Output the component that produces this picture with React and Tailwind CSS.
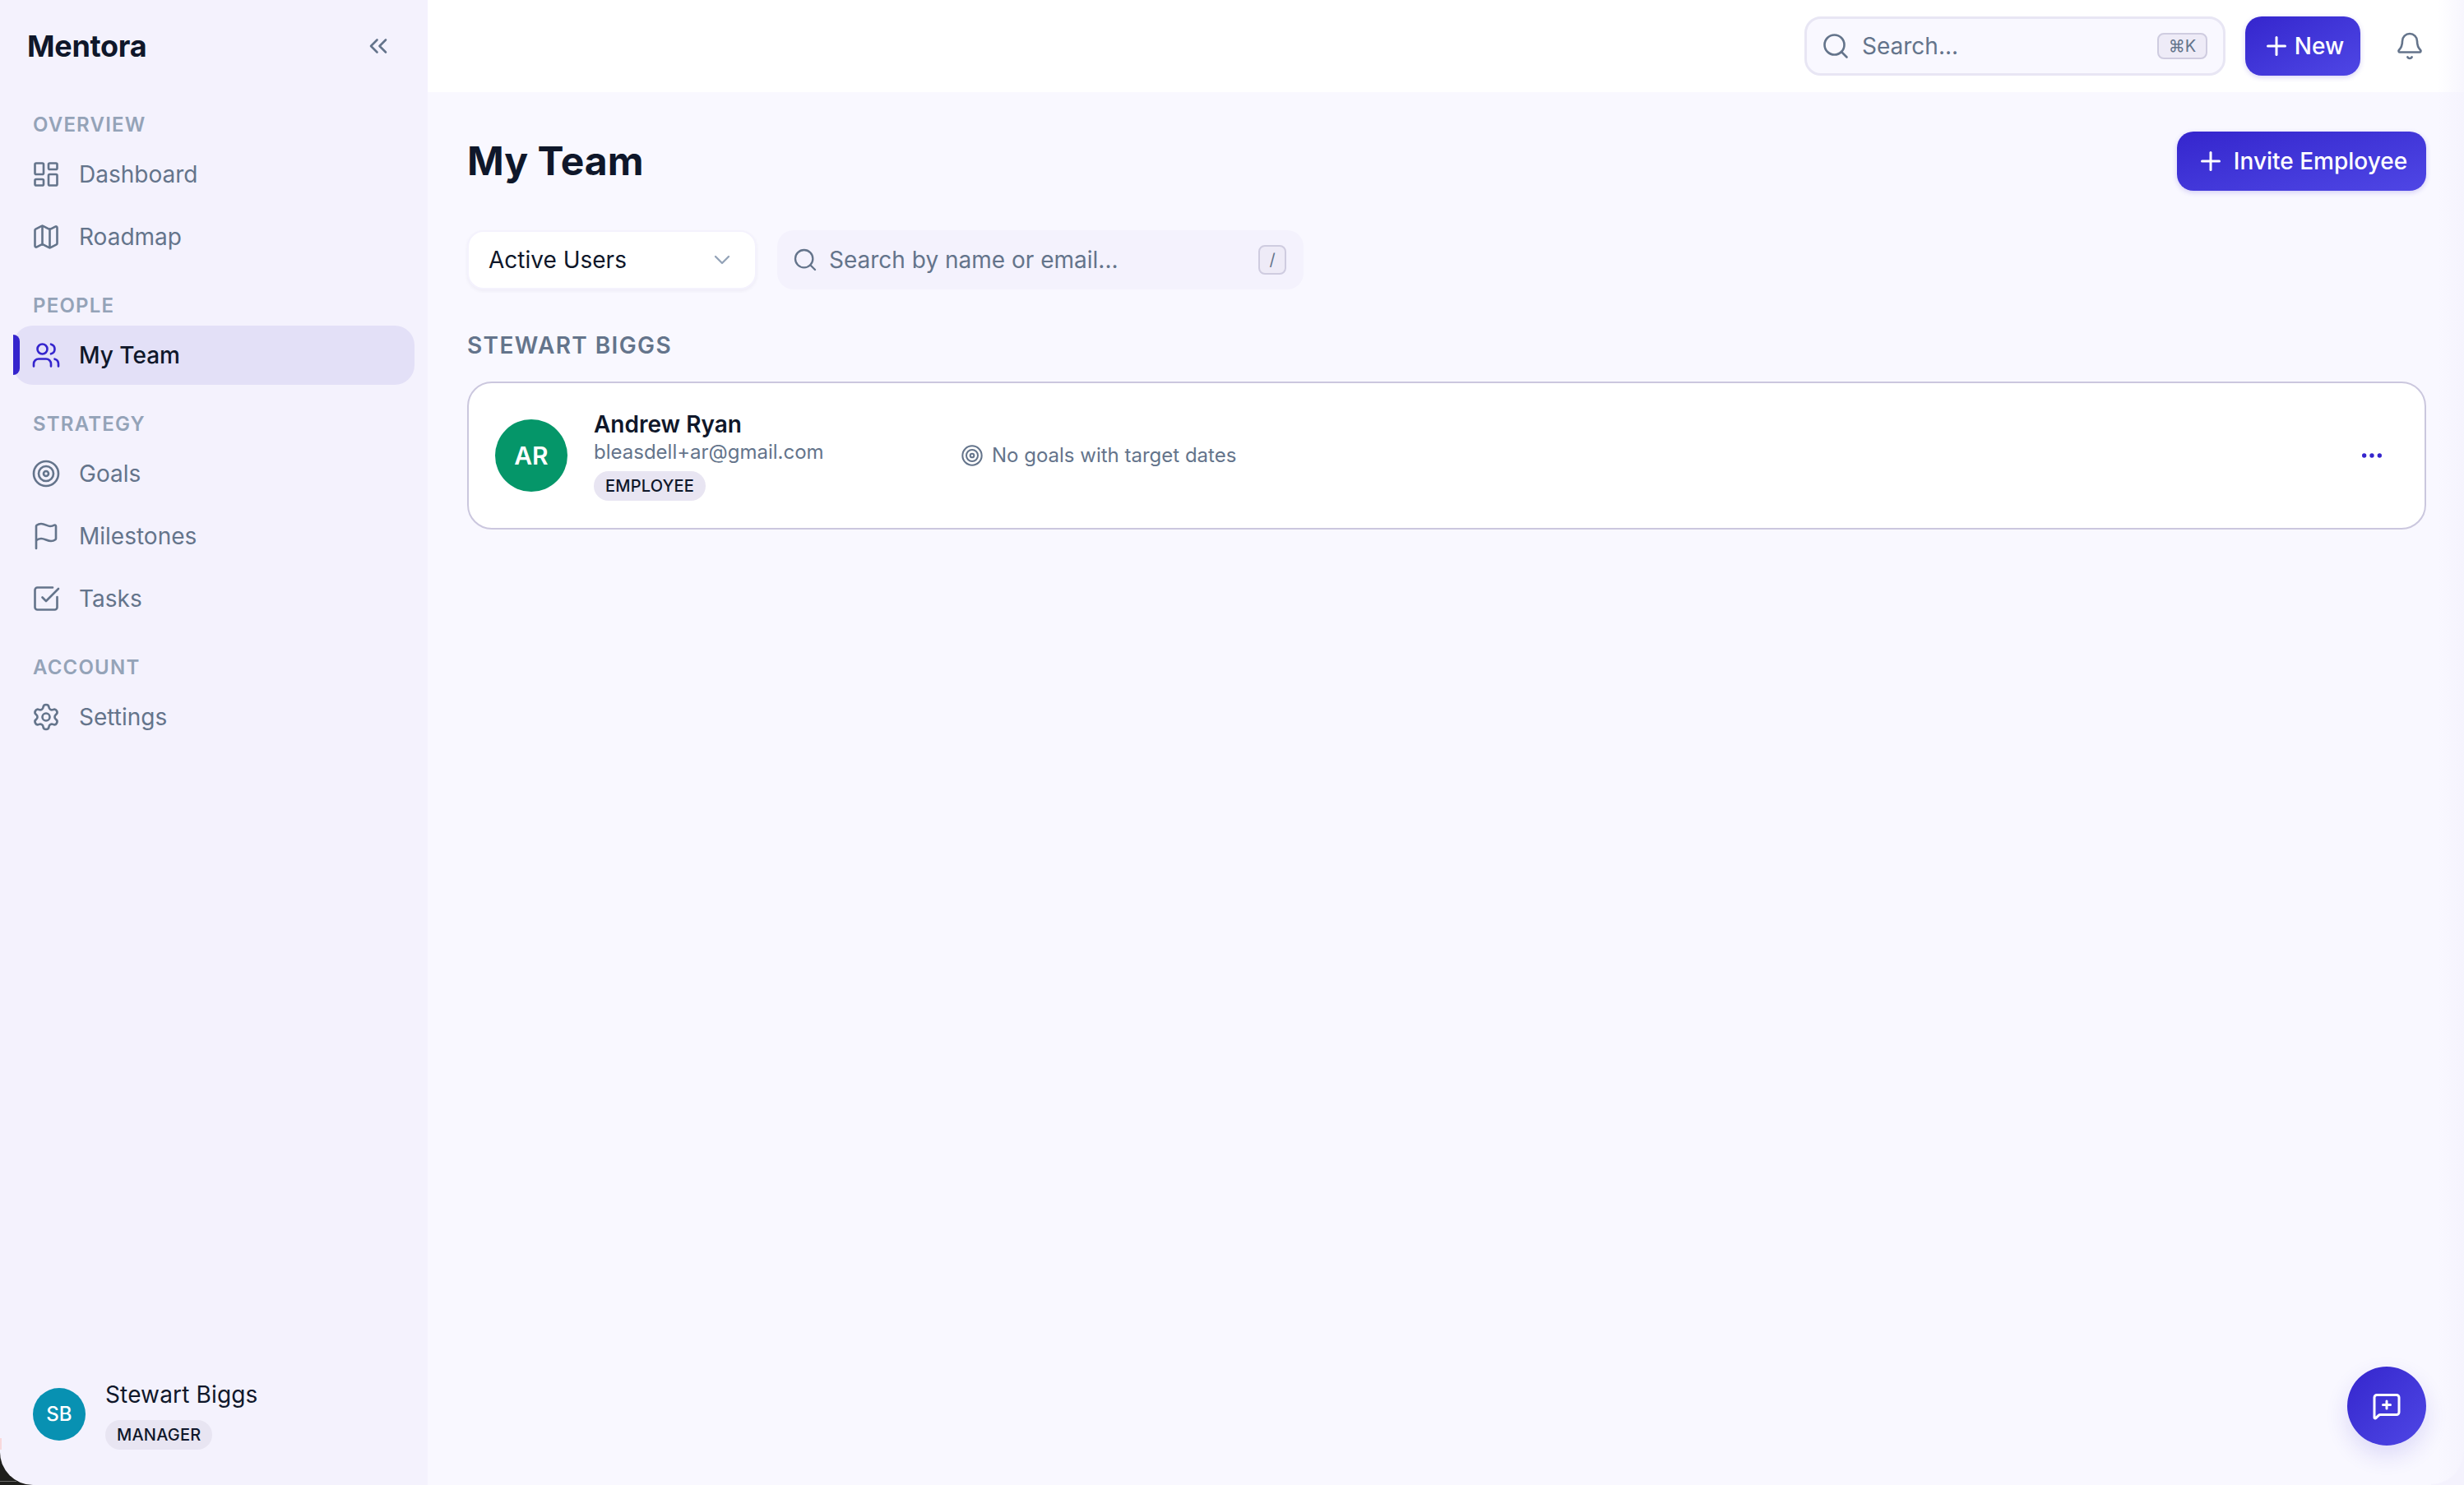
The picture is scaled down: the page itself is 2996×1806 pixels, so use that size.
import React from "react";
import { LayoutDashboard, Map as MapIcon, Users, Target, Flag, SquareCheckBig, Settings, ChevronsLeft, Search, Plus, Bell, ChevronDown, Ellipsis, MessageSquarePlus } from "lucide-react";

function NavItem({ icon: Icon, label, active }) {
  return (
    <div className={`relative flex h-[72px] items-center gap-[22px] rounded-[24px] pl-[22px] text-[28px] leading-none ${active ? "bg-[#e3e0f7] font-medium text-[#0f172a]" : "text-[#64748b]"}`}>
      {active && <span className="absolute left-0 top-[11px] h-[49px] w-[8px] rounded-r-[8px] bg-[#3525cd]" />}
      <Icon className={`h-[36px] w-[36px] ${active ? "text-[#3525cd]" : "text-[#64748b]"}`} strokeWidth={1.75} />
      <span>{label}</span>
    </div>
  );
}

function SectionTitle({ children }) {
  return <div className="mb-[9px] ml-[24px] h-[30px] text-[24px] font-semibold leading-[30px] tracking-[1.2px] text-[#94a3b8]">{children}</div>;
}

function Badge({ children }) {
  return <span className="inline-flex h-[36px] items-center rounded-full bg-[#e8e5f2] px-[14px] text-[20px] font-medium leading-none tracking-[0.2px] text-[#0f172a]">{children}</span>;
}

export default function App() {
  return (
    <div className="relative flex h-[1806px] w-[2996px] overflow-hidden bg-[#1e1e1c] font-['Inter',sans-serif]">
      <aside className="flex h-full w-[520px] shrink-0 flex-col rounded-bl-[40px] bg-[#f4f2fd] pb-[43px]">
        <div className="flex h-[112px] items-center justify-between pl-[33px] pr-[42px]">
          <span className="text-[36px] font-bold leading-none tracking-[-0.3px] text-[#0f172a]">Mentora</span>
          <ChevronsLeft className="h-[36px] w-[36px] text-[#64748b]" strokeWidth={1.75} />
        </div>
        <nav className="flex flex-1 flex-col px-[16px] pt-[25px]">
          <SectionTitle>OVERVIEW</SectionTitle>
          <div className="flex flex-col gap-[4px]">
            <NavItem icon={LayoutDashboard} label="Dashboard" />
            <NavItem icon={MapIcon} label="Roadmap" />
          </div>
          <div className="mt-[33px]"><SectionTitle>PEOPLE</SectionTitle></div>
          <NavItem icon={Users} label="My Team" active />
          <div className="mt-[33px]"><SectionTitle>STRATEGY</SectionTitle></div>
          <div className="flex flex-col gap-[4px]">
            <NavItem icon={Target} label="Goals" />
            <NavItem icon={Flag} label="Milestones" />
            <NavItem icon={SquareCheckBig} label="Tasks" />
          </div>
          <div className="mt-[33px]"><SectionTitle>ACCOUNT</SectionTitle></div>
          <NavItem icon={Settings} label="Settings" />
        </nav>
        <div className="flex items-center gap-[24px] pl-[40px]">
          <div className="mb-[2px] flex h-[64px] w-[64px] items-center justify-center rounded-full bg-[#0891b2] text-[24px] font-medium text-white">SB</div>
          <div className="flex flex-col items-start gap-[14px]">
            <span className="text-[28px] leading-[34px] tracking-[0.15px] text-[#0f172a]">Stewart Biggs</span>
            <Badge>MANAGER</Badge>
          </div>
        </div>
      </aside>

      <div className="flex min-w-0 flex-1 flex-col bg-[#f9f8ff]">
        <header className="flex h-[112px] items-center justify-end bg-white pr-[48px]">
          <div className="flex h-[72px] w-[512px] items-center rounded-[20px] border-[3px] border-[#e8e6f4] bg-[#f9f8ff] pl-[17px] pr-[19px]">
            <Search className="h-[36px] w-[36px] text-[#64748b]" strokeWidth={1.75} />
            <span className="ml-[14px] flex-1 text-[28px] leading-none text-[#64748b]">Search...</span>
            <kbd className="flex h-[32px] w-[61px] items-center justify-center rounded-[8px] border-2 border-[#cfcce0] bg-[#eeebf7] font-['Inter',sans-serif] text-[20px] leading-none text-[#64748b]">⌘K</kbd>
          </div>
          <button className="ml-[24px] flex h-[72px] w-[140px] items-center justify-center gap-[4px] rounded-[20px] bg-gradient-to-br from-[#3525cd] to-[#4f46e5] text-[28px] font-medium leading-none text-white shadow-[0_2px_6px_rgba(53,37,205,0.2)]">
            <Plus className="h-[36px] w-[36px]" strokeWidth={2} />
            New
          </button>
          <Bell className="ml-[42px] h-[36px] w-[36px] text-[#64748b]" strokeWidth={1.75} />
        </header>

        <main className="relative flex-1 pl-[48px] pr-[46px]">
          <div className="mt-[48px] flex h-[72px] items-center justify-between">
            <h1 className="text-[48px] font-bold leading-none text-[#0f172a]">My Team</h1>
            <button className="flex h-[72px] w-[303px] items-center justify-center gap-[10px] rounded-[20px] bg-gradient-to-br from-[#3525cd] to-[#4f46e5] text-[28px] font-medium leading-none text-white shadow-[0_2px_6px_rgba(53,37,205,0.2)]">
              <Plus className="h-[36px] w-[36px]" strokeWidth={2} />
              Invite Employee
            </button>
          </div>

          <div className="mt-[48px] flex gap-[25px]">
            <div className="flex h-[72px] w-[352px] items-center justify-between rounded-[20px] border-2 border-[#f4f2fd] bg-white pl-[24px] pr-[24px] shadow-[0_2px_4px_rgba(30,27,75,0.05)]">
              <span className="text-[28px] leading-none text-[#0f172a]">Active Users</span>
              <ChevronDown className="h-[32px] w-[32px] text-[#94a3b8]" strokeWidth={1.75} />
            </div>
            <div className="flex h-[72px] w-[640px] items-center rounded-[20px] bg-[#f4f2fd] pl-[18px] pr-[21px]">
              <Search className="h-[32px] w-[32px] text-[#64748b]" strokeWidth={1.75} />
              <span className="ml-[13px] flex-1 text-[28px] leading-none text-[#64748b]">Search by name or email...</span>
              <kbd className="flex h-[36px] w-[34px] items-center justify-center rounded-[8px] border-2 border-[#cfcce0] bg-[#eeebf7] font-['Inter',sans-serif] text-[20px] leading-none text-[#64748b]">/</kbd>
            </div>
          </div>

          <div className="mt-[50px] text-[28px] font-semibold leading-[36px] tracking-[1.4px] text-[#64748b]">STEWART BIGGS</div>

          <div className="mt-[26px] flex h-[180px] items-center rounded-[30px] border-2 border-[#cbc7de] bg-white pl-[32px] pr-[48px]">
            <div className="flex h-[88px] w-[88px] shrink-0 items-center justify-center rounded-full bg-[#059669] text-[30px] font-semibold text-white">AR</div>
            <div className="mb-[2px] ml-[32px] flex w-[445px] shrink-0 flex-col items-start">
              <span className="text-[28px] font-semibold leading-[36px] text-[#0f172a]">Andrew Ryan</span>
              <span className="text-[24px] leading-[32px] text-[#64748b]">bleasdell+ar@gmail.com</span>
              <span className="mt-[7px]"><Badge>EMPLOYEE</Badge></span>
            </div>
            <div className="flex flex-1 items-center gap-[10px] pl-[1px] text-[24px] leading-none text-[#64748b]">
              <Target className="h-[28px] w-[28px]" strokeWidth={1.75} />
              <span>No goals with target dates</span>
            </div>
            <Ellipsis className="h-[32px] w-[32px] text-[#3525cd]" strokeWidth={2} />
          </div>

          <button className="absolute bottom-[48px] right-[46px] flex h-[96px] w-[96px] items-center justify-center rounded-full bg-gradient-to-br from-[#3525cd] to-[#4f46e5] text-white shadow-[0_12px_28px_rgba(53,37,205,0.14)]">
            <MessageSquarePlus className="h-[36px] w-[36px]" strokeWidth={2} />
          </button>
        </main>
      </div>

      <div className="pointer-events-none absolute right-0 top-0 h-full w-[32px] bg-gradient-to-r from-transparent to-[#f4f2fd]/70" />
      <div className="pointer-events-none absolute bottom-0 right-0 h-[40px] w-[40px] bg-[radial-gradient(circle_at_top_left,transparent_38px,#f4f2fd_40px)]" />
      <div className="absolute bottom-[43px] left-0 h-[14px] w-[2px] bg-[#f8d8dc]" />
      <div className="absolute bottom-[4px] left-0 h-[1px] w-[20px] bg-[#6b6b69]" />
    </div>
  );
}
